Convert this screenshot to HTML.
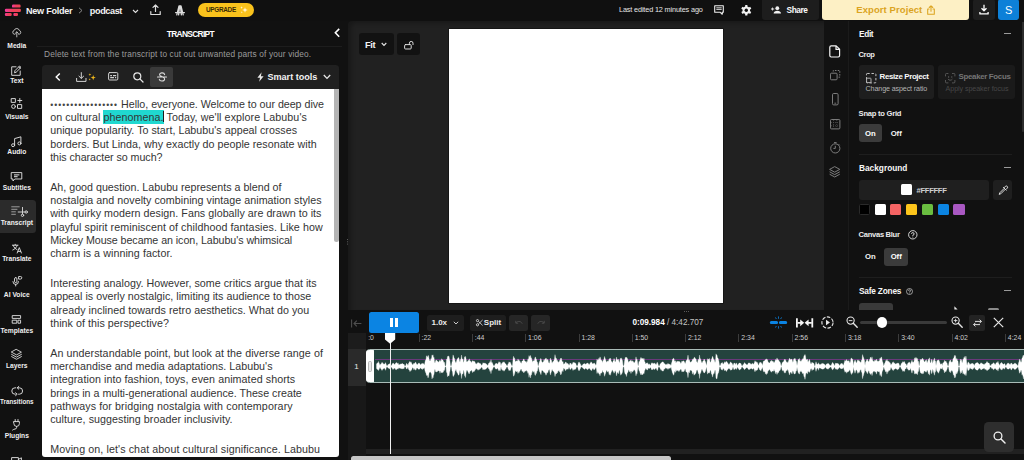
<!DOCTYPE html>
<html lang="en">
<head>
<meta charset="utf-8">
<title>podcast - editor</title>
<style>
*{box-sizing:border-box;margin:0;padding:0}
html,body{width:1024px;height:460px;overflow:hidden;background:#111111;font-family:"Liberation Sans","DejaVu Sans",sans-serif;color:#fff}
.abs{position:absolute}
#app{position:relative;width:1024px;height:460px;overflow:hidden;background:#111111}
svg{position:absolute;overflow:visible}
.t{position:absolute;white-space:nowrap;line-height:10px;height:10px;margin-top:-5px}
.c{transform:translateX(-50%)}
.b{font-weight:bold}
.ic{fill:none;stroke:#dcdcdc;stroke-width:0.95;stroke-linecap:round;stroke-linejoin:round}
/* sidebar */
.sl{position:absolute;left:-8.2px;width:50px;text-align:center;font-size:6.7px;font-weight:bold;line-height:8px;height:8px;margin-top:-4px;color:#f0f0f0;white-space:nowrap}
/* transcript */
#ttool{left:42px;top:64.7px;width:297.3px;height:24.3px;background:#202020;border-radius:3.5px 3.5px 0 0}
#twhite{left:42px;top:89px;width:297.3px;height:368px;background:#ffffff;border-radius:0 0 3px 3px;overflow:hidden}
#ttext{position:absolute;left:8.2px;top:8.6px;font-size:10.7px;line-height:13.34px;color:#343434;white-space:nowrap;letter-spacing:0.05px}
#ttext p{margin-bottom:16.25px}
.hl{background:#20d8d0;padding:1.1px 0 0.7px;position:relative}
.cur{position:absolute;right:-0.2px;top:1.6px;width:1.3px;height:10.4px;background:#1c1c1c}
.btn{position:absolute;background:#1e1e1e;border-radius:3px}
</style>
</head>
<body>
<div id="app">

<!-- ================= TOP BAR ================= -->
<div id="top" class="abs" style="left:0;top:0;width:1024px;height:21px;background:#101010"></div>
<!-- logo -->
<svg style="left:0;top:0" width="24" height="20" viewBox="0 0 24 20">
  <defs><linearGradient id="lg" x1="0" y1="0" x2="1" y2="0"><stop offset="0" stop-color="#f6389f"/><stop offset="0.45" stop-color="#ef3f5c"/><stop offset="1" stop-color="#ec4453"/></linearGradient></defs>
  <g fill="url(#lg)">
    <rect x="12" y="4.600" width="8.600" height="3" rx="1.200"/>
    <rect x="4.900" y="8.700" width="16" height="3.200" rx="1.200"/>
    <rect x="4.900" y="12.900" width="6.800" height="3" rx="1.200"/>
    <rect x="13.400" y="12.900" width="4.600" height="3" rx="1.200"/>
  </g>
</svg>
<div class="t b" style="left:26px;top:10.7px;font-size:9.1px;color:#f4f4f4;letter-spacing:-0.27px">New Folder</div>
<svg style="left:78px;top:7px" width="5" height="7" viewBox="0 0 5 7"><path d="M1 0.8L4 3.5L1 6.2" fill="none" stroke="#8a8a8a" stroke-width="1"/></svg>
<div class="t b" style="left:89.8px;top:10.7px;font-size:9.1px;color:#f4f4f4;letter-spacing:-0.38px">podcast</div>
<svg style="left:132px;top:9px" width="7" height="5" viewBox="0 0 7 5"><path d="M1 1L3.5 3.5L6 1" fill="none" stroke="#e0e0e0" stroke-width="1.1"/></svg>
<!-- upload icon -->
<svg style="left:150px;top:4px" width="11" height="12" viewBox="0 0 11 12"><path class="ic" style="stroke-width:1.2" d="M5.5 7.5V1.2M3 3.4L5.5 1L8 3.4M0.8 7.5V10.5H10.2V7.5"/></svg>
<!-- A icon -->
<svg style="left:175px;top:4.5px" width="10" height="11" viewBox="0 0 10 11"><path class="ic" style="stroke-width:1.3" d="M1.8 9.8L4 0.8H6L8.2 9.8M3.6 9.8L4.6 1.5M6.4 9.8L5.4 1.5M0.6 7.6H9.4"/></svg>
<!-- upgrade -->
<div class="abs" style="left:197.6px;top:2.5px;width:56.2px;height:14.6px;border-radius:7.3px;background:#f9c21c"></div>
<div class="t b" style="left:206px;top:9.9px;font-size:6.4px;color:#3a2c05;letter-spacing:-0.3px">UPGRADE</div>
<svg style="left:240px;top:6px" width="8" height="8" viewBox="0 0 8 8"><path d="M5 1.2L5.7 3.3L7.8 4L5.7 4.7L5 6.8L4.3 4.7L2.2 4L4.3 3.3ZM1.6 0.3L1.95 1.25L2.9 1.6L1.95 1.95L1.6 2.9L1.25 1.95L0.3 1.6L1.25 1.25ZM1.8 5.2L2.1 5.9L2.8 6.2L2.1 6.5L1.8 7.2L1.5 6.5L0.8 6.2L1.5 5.9Z" fill="#fff7dd"/></svg>

<div class="t" style="left:619px;top:10px;font-size:7.3px;color:#e6e6e6;letter-spacing:-0.15px">Last edited 12 minutes ago</div>
<!-- comment icon -->
<svg style="left:714px;top:5px" width="10" height="10" viewBox="0 0 10 10"><path d="M0.7 0.8H9.3V7.2H8.2V9.3L6 7.2H0.7Z" fill="none" stroke="#ededed" stroke-width="1.1" stroke-linejoin="round"/><path d="M2.3 2.8H7.7M2.3 4.4H7.7" stroke="#ededed" stroke-width="0.9"/></svg>
<!-- gear -->
<svg style="left:740.5px;top:4.7px" width="10.6" height="10.6" viewBox="-5.3 -5.3 10.6 10.6"><g fill="#f2f2f2"><circle r="3.7"/><g id="gt"><rect x="-1.15" y="-5.2" width="2.3" height="10.4" rx="0.5"/></g><use href="#gt" transform="rotate(60)"/><use href="#gt" transform="rotate(120)"/></g><circle r="1.7" fill="#101010"/></svg>
<!-- share -->
<div class="btn" style="left:761.6px;top:0;width:57.5px;height:19.6px;border-radius:0 0 3px 3px;background:#1d1d1d"></div>
<svg style="left:771px;top:6px" width="10" height="8" viewBox="0 0 10 8"><g fill="#f0f0f0"><circle cx="6.3" cy="2.2" r="1.9"/><path d="M2.6 7.6C2.6 5.6 4.4 4.8 6.3 4.8S10 5.6 10 7.6Z"/><path d="M0 2.6H1.2V1.4H2V2.6H3.2V3.4H2V4.6H1.2V3.4H0Z"/></g></svg>
<div class="t b" style="left:786.6px;top:10px;font-size:8.3px;color:#fafafa;letter-spacing:-0.45px">Share</div>
<!-- export -->
<div class="abs" style="left:822px;top:0;width:147.4px;height:19.7px;border-radius:0 0 3px 3px;background:#fdf0c5"></div>
<div class="t b" style="left:856.3px;top:10px;font-size:9.5px;color:#dba41f;letter-spacing:0.08px">Export Project</div>
<svg style="left:926.5px;top:4.8px" width="8" height="10" viewBox="0 0 8 10"><path d="M4 6.2V0.9M2.2 2.5L4 0.8L5.8 2.5M2 4H0.7V9.2H7.3V4H6" fill="none" stroke="#dba41f" stroke-width="1.05" stroke-linejoin="round" stroke-linecap="round"/></svg>
<!-- download -->
<div class="btn" style="left:973.1px;top:-1px;width:22px;height:20.7px;border-radius:3px;background:#1e1e1e"></div>
<svg style="left:979.2px;top:4.3px" width="10" height="11" viewBox="0 0 10 11"><path d="M5 0.8V6.6M2.5 4.3L5 6.8L7.5 4.3M0.9 8V9.9H9.1V8" fill="none" stroke="#fff" stroke-width="1.3" stroke-linejoin="round"/></svg>
<!-- avatar -->
<div class="abs" style="left:998.1px;top:-1px;width:20.6px;height:20.7px;border-radius:3px;background:#0d80d8"></div>
<div class="t c" style="left:1008.6px;top:10.2px;font-size:11px;color:#fff">S</div>

<!-- ================= SIDEBAR ================= -->
<div class="abs" style="left:0;top:200px;width:36px;height:32.5px;background:#2b2b2b;border-radius:0 3.5px 3.5px 0"></div>
<!-- media -->
<svg style="left:12px;top:27.8px" width="9.6" height="9.6" viewBox="0 0 11 11"><path class="ic" d="M3.3 7.2H2.8A2.3 2.3 0 0 1 2.6 2.7A3 3 0 0 1 8.4 2.9A2.2 2.2 0 0 1 8.2 7.2H7.7M5.5 10.2V4.6M3.7 6.2L5.5 4.4L7.3 6.2"/></svg>
<div class="sl" style="top:45.9px">Media</div>
<!-- text -->
<svg style="left:11px;top:64.6px" width="11" height="11" viewBox="0 0 11 11"><path class="ic" d="M5 1.8H0.7V10.3H9.2V6M3.6 7.4L4 5.6L8.6 1L10 2.4L5.4 7ZM7.7 1.9L9.1 3.3"/></svg>
<div class="sl" style="top:81px">Text</div>
<!-- visuals -->
<svg style="left:11.3px;top:98.3px" width="11.5" height="11" viewBox="0 0 11.5 11"><path class="ic" d="M0.6 0.6H4.4V4.4H0.6ZM6.9 6.6H10.7V10.4H6.9ZM8.8 0.5V4.5M6.8 2.5H10.8"/><circle class="ic" cx="2.5" cy="8.5" r="1.9"/></svg>
<div class="sl" style="top:117px">Visuals</div>
<!-- audio -->
<svg style="left:11.3px;top:135.8px" width="11" height="11" viewBox="0 0 11 11"><path class="ic" d="M3.6 9V2.6L9.9 0.8V7.2"/><circle class="ic" cx="2.1" cy="9.2" r="1.5"/><circle class="ic" cx="8.4" cy="7.4" r="1.5"/></svg>
<div class="sl" style="top:152.3px">Audio</div>
<!-- subtitles -->
<svg style="left:11px;top:172.2px" width="11.4" height="9.6" viewBox="0 0 11.4 9.6"><path class="ic" d="M0.6 0.6H10.8V7H3.8L2 9V7H0.6Z"/><path d="M3 2.9H8.4M3 4.6H6.6" stroke="#bdbdbd" stroke-width="1.2"/></svg>
<div class="sl" style="top:188.3px">Subtitles</div>
<!-- transcript -->
<svg style="left:11.3px;top:206.4px" width="17" height="11" viewBox="0 0 17 11"><path d="M0.3 0.8H8.6M0.3 3.3H6.4M0.3 5.8H4.8M0.3 8.3H4.8" stroke="#a9a9a9" stroke-width="0.9"/><path class="ic" style="stroke-width:0.9" d="M7.2 6H14M11.5 1.4V8"/><circle class="ic" style="stroke-width:0.9" cx="15.2" cy="6" r="1.2"/><circle class="ic" style="stroke-width:0.9" cx="11.5" cy="9.3" r="1.2"/></svg>
<div class="sl" style="top:223.4px">Transcript</div>
<!-- translate -->
<svg style="left:11.7px;top:243.7px" width="10" height="9.4" viewBox="0 0 10 9.4"><path class="ic" d="M0.4 1.2H6M3.2 0.3V1.2M1.2 1.4C1.8 3.6 3.6 5 5 5.6M5.2 1.4C4.6 3.6 2.4 5.4 0.8 6M5.2 9L7.3 3.6L9.4 9M6 7.4H8.6"/></svg>
<div class="sl" style="top:259.4px">Translate</div>
<!-- ai voice -->
<svg style="left:12px;top:276.2px" width="10.4" height="10.4" viewBox="0 0 10.4 10.4"><rect class="ic" x="2.5" y="1.6" width="2.4" height="5" rx="1.2"/><path class="ic" d="M0.900 5.600A2.800 2.800 0 0 0 6.500 5.600M3.700 8.400V10M7 0.500H8.500A1.300 1.300 0 0 1 8.500 3.100H7Z"/></svg>
<div class="sl" style="top:294.6px">AI Voice</div>
<!-- templates -->
<svg style="left:12.1px;top:315px" width="9.2" height="8.8" viewBox="0 0 9.2 8.800"><path class="ic" d="M0.600 0.600H8.600V3.400H0.600ZM0.600 5.200H4.800V8.200H0.600ZM6.400 5.200H8.600V8.200H6.400Z"/></svg>
<div class="sl" style="top:330.6px">Templates</div>
<!-- layers -->
<svg style="left:11px;top:349.3px" width="11" height="11.6" viewBox="0 0 11 11.600"><path class="ic" style="stroke-width:0.9" d="M5.500 0.500L10.400 3.200L5.500 5.900L0.600 3.200ZM0.600 5.400L5.500 8.100L10.400 5.400M0.600 7.600L5.500 10.300L10.400 7.600"/></svg>
<div class="sl" style="top:365.9px">Layers</div>
<!-- transitions -->
<svg style="left:10.6px;top:385.6px" width="12.4" height="10" viewBox="0 0 12.400 10"><path class="ic" d="M4.800 1.800H4A3.200 3.200 0 0 0 4 8.200H4.400M7.600 8.200H8.400A3.200 3.200 0 0 0 8.400 1.800H6.400M7.800 0.400L6.200 1.800L7.800 3.200M4.600 6.800L6.200 8.200L4.600 9.600"/></svg>
<div class="sl" style="top:401.5px;font-size:6.3px">Transitions</div>
<!-- plugins -->
<svg style="left:12px;top:419px" width="8.6" height="11.6" viewBox="0 0 8.600 11.600"><path class="ic" d="M3.200 0.500V2.600M6 0.500V2.600M1.800 2.600H7.400V4.600A2.800 2.800 0 0 1 1.800 4.600ZM4.600 7.400V8.800C4.600 10.400 2 9.600 0.600 11"/></svg>
<div class="sl" style="top:435.5px">Plugins</div>
<!-- next (cut off) -->
<svg style="left:11px;top:456.6px" width="11" height="6" viewBox="0 0 11 6"><path class="ic" d="M0.600 5V0.600H7.400V5M7.400 2.400L10.400 0.800V5"/></svg>

<!-- ================= TRANSCRIPT PANEL ================= -->
<div class="t b c" style="left:190.3px;top:34.3px;font-size:8.4px;color:#fff;letter-spacing:-0.68px">TRANSCRIPT</div>
<svg style="left:333.500px;top:28.300px" width="6.600" height="9.600" viewBox="0 0 6 9"><path d="M4.800 0.800L1.200 4.500L4.800 8.200" fill="none" stroke="#fff" stroke-width="1.5"/></svg>
<div class="abs" style="left:36.5px;top:45.8px;width:305px;height:1px;background:#1d1d1d"></div>
<div class="t" style="left:44px;top:54.4px;font-size:8.3px;color:#9c9c9c;letter-spacing:0.15px">Delete text from the transcript to cut out unwanted parts of your video.</div>
<div id="ttool" class="abs"></div>
<!-- toolbar icons -->
<svg style="left:54.6px;top:73px" width="6" height="8" viewBox="0 0 6 8"><path d="M4.800 0.500L1.200 4L4.800 7.500" fill="none" stroke="#fff" stroke-width="1.4"/></svg>
<svg style="left:76px;top:71.6px" width="10.600" height="10" viewBox="0 0 10.600 10"><path class="ic" style="stroke:#dcdcdc" d="M5.300 0.600V6.200M3 4.200L5.300 6.400L7.600 4.200M0.600 6.400V9.400H10V6.400"/></svg>
<svg style="left:87.600px;top:72.600px" width="8" height="8" viewBox="0 0 8 8"><path d="M5.200 2L5.900 3.900L7.800 4.600L5.900 5.300L5.200 7.200L4.500 5.300L2.600 4.600L4.500 3.900ZM1.900 0.200L2.300 1.200L3.300 1.600L2.300 2L1.900 3L1.500 2L0.500 1.600L1.500 1.200ZM1.700 5.400L2 6.100L2.700 6.400L2 6.700L1.700 7.400L1.400 6.700L0.700 6.400L1.400 6.100Z" fill="#f1b91b"/></svg>
<svg style="left:108.400px;top:72.300px" width="10.400" height="8.600" viewBox="0 0 10.400 8.600"><rect class="ic" style="stroke:#dcdcdc" x="0.600" y="0.600" width="9.200" height="7.400" rx="1"/><path d="M2.200 3.600H4M5 3.600H8.200M2.200 5.600H6M7 5.600H8.200" stroke="#cfcfcf" stroke-width="1.100"/></svg>
<svg style="left:132.600px;top:71.800px" width="10.600" height="10.600" viewBox="0 0 10.600 10.600"><circle class="ic" style="stroke:#e6e6e6;stroke-width:1.200" cx="4.300" cy="4.300" r="3.500"/><path d="M6.900 6.900L10 10" stroke="#e6e6e6" stroke-width="1.300" stroke-linecap="round"/></svg>
<div class="abs" style="left:150.300px;top:67px;width:23px;height:19.600px;background:#3a3a3a;border-radius:2px"></div>
<svg style="left:157px;top:72px" width="10" height="10" viewBox="0 0 10 10"><path class="ic" style="stroke:#dedede;stroke-width:1.100" d="M7.600 2.600C7.300 0.200 2.400 0.400 2.600 2.800C2.700 3.800 3.600 4.300 5 4.600M2.300 7.200C2.600 9.800 7.800 9.600 7.600 7C7.500 6 6.900 5.500 6.200 5.200M0.500 5H9.500"/></svg>
<svg style="left:257px;top:71.600px" width="7" height="10" viewBox="0 0 7 10"><path d="M4.600 0.300L0.400 5.700H3L2.200 9.700L6.600 4.200H3.900Z" fill="#e8e8e8"/></svg>
<div class="t b" style="left:267.400px;top:76.600px;font-size:9.100px;color:#f2f2f2">Smart tools</div>
<svg style="left:322.600px;top:74px" width="8" height="6" viewBox="0 0 8 6"><path d="M0.800 1L4 4.400L7.200 1" fill="none" stroke="#e6e6e6" stroke-width="1.300"/></svg>

<div id="twhite" class="abs">
<div id="ttext">
<p><span id="L0" style="letter-spacing:-0.031px"><span style="letter-spacing:1.02px;font-size:8.5px;line-height:1px;color:#444">•••••••••••••••••</span> Hello, everyone. Welcome to our deep dive</span><br><span id="L1" style="letter-spacing:0.079px">on cultural <span class="hl">phenomena.<i class="cur"></i></span> Today, we'll explore Labubu's</span><br><span id="L2" style="letter-spacing:0.031px">unique popularity. To start, Labubu's appeal crosses</span><br><span id="L3" style="letter-spacing:0.028px">borders. But Linda, why exactly do people resonate with</span><br><span id="L4" style="letter-spacing:-0.053px">this character so much?</span></p>
<p><span id="L5" style="letter-spacing:0.003px">Ah, good question. Labubu represents a blend of</span><br><span id="L6" style="letter-spacing:0.040px">nostalgia and novelty combining vintage animation styles</span><br><span id="L7" style="letter-spacing:0.039px">with quirky modern design. Fans globally are drawn to its</span><br><span id="L8" style="letter-spacing:0.068px">playful spirit reminiscent of childhood fantasies. Like how</span><br><span id="L9" style="letter-spacing:-0.065px">Mickey Mouse became an icon, Labubu's whimsical</span><br><span id="L10" style="letter-spacing:0.065px">charm is a winning factor.</span></p>
<p><span id="L11" style="letter-spacing:0.042px">Interesting analogy. However, some critics argue that its</span><br><span id="L12" style="letter-spacing:0.026px">appeal is overly nostalgic, limiting its audience to those</span><br><span id="L13" style="letter-spacing:0.047px">already inclined towards retro aesthetics. What do you</span><br><span id="L14" style="letter-spacing:0.043px">think of this perspective?</span></p>
<p><span id="L15" style="letter-spacing:0.074px">An understandable point, but look at the diverse range of</span><br><span id="L16" style="letter-spacing:0.024px">merchandise and media adaptations. Labubu's</span><br><span id="L17" style="letter-spacing:0.075px">integration into fashion, toys, even animated shorts</span><br><span id="L18" style="letter-spacing:-0.002px">brings in a multi-generational audience. These create</span><br><span id="L19" style="letter-spacing:0.101px">pathways for bridging nostalgia with contemporary</span><br><span id="L20" style="letter-spacing:0.049px">culture, suggesting broader inclusivity.</span></p>
<p><span id="L21" style="letter-spacing:0.093px">Moving on, let's chat about cultural significance. Labubu</span></p>
</div>
<div class="abs" style="left:292.400px;top:0;width:4.900px;height:153.400px;background:#b4b4b4;border-radius:0 0 2.500px 2.500px"></div>
</div>
<!-- resize dots -->
<div class="abs" style="left:346.500px;top:238.600px;width:1px;height:1px;background:#5a5a5a;box-shadow:0 2.300px 0 #5a5a5a,0 4.600px 0 #5a5a5a"></div>

<!-- ================= CANVAS AREA ================= -->
<div class="abs" style="left:348px;top:21.300px;width:476px;height:288.6px;background:#212121;border-radius:4px 0 0 0;box-shadow:inset 4px 3px 4px -1px rgba(0,0,0,0.28)"></div>
<div class="abs" style="left:449px;top:28.800px;width:274.300px;height:273.800px;background:#ffffff;box-shadow:0 0 0 0.9px #161616"></div>
<div class="btn" style="left:359px;top:32.700px;width:34.800px;height:22.800px;background:#121212"></div>
<div class="t b" style="left:365px;top:44.900px;font-size:9.300px;color:#f4f4f4;letter-spacing:-0.35px">Fit</div>
<svg style="left:381.300px;top:42px" width="6" height="5" viewBox="0 0 6 5"><path d="M0.700 1L3 3.400L5.300 1" fill="none" stroke="#e6e6e6" stroke-width="1.100"/></svg>
<div class="btn" style="left:397px;top:32.700px;width:22.800px;height:22.800px;background:#121212"></div>
<svg style="left:403.600px;top:39.800px" width="10" height="9.400" viewBox="0 0 10 9.400"><rect class="ic" style="stroke:#e6e6e6" x="0.600" y="4.600" width="6.600" height="4.400" rx="0.900"/><path class="ic" style="stroke:#e6e6e6" d="M5.400 4.600V3.200A1.800 1.800 0 0 1 9 3.200V4.600"/></svg>

<!-- ================= RIGHT ICON COLUMN + PANEL ================= -->
<div class="abs" style="left:824px;top:21px;width:25px;height:288.500px;background:#121212"></div>
<div class="abs" style="left:848.400px;top:21px;width:1px;height:288.500px;background:#1b1b1b"></div>
<div class="abs" style="left:849.400px;top:21px;width:174.600px;height:288.500px;background:#111111"></div>
<!-- scroll strip -->
<div class="abs" style="left:1021.8px;top:21.5px;width:2.2px;height:110px;background:#2c2c2c;border-radius:0 0 1px 1px"></div>
<!-- icon column icons -->
<svg style="left:829.400px;top:45px" width="11.400" height="12.800" viewBox="0 0 11.400 12.800"><path d="M0.800 2.200A1.400 1.400 0 0 1 2.200 0.800H7.200L10.600 4.200V10.600A1.400 1.400 0 0 1 9.200 12H2.200A1.400 1.400 0 0 1 0.800 10.600ZM7 0.900V4.400H10.500" fill="none" stroke="#f4f4f4" stroke-width="1.200" stroke-linejoin="round"/></svg>
<svg style="left:830px;top:70.400px" width="10.400" height="10.400" viewBox="0 0 10.400 10.400"><rect x="0.500" y="3.200" width="6.600" height="6.600" rx="1" fill="none" stroke="#7d7d7d" stroke-width="1"/><path d="M3.200 1.600V0.500H9.800V7.200H8.600" fill="none" stroke="#7d7d7d" stroke-width="1" stroke-dasharray="1.600 1.200"/></svg>
<svg style="left:832px;top:93.400px" width="6.600" height="12.400" viewBox="0 0 6.600 12.400"><rect x="0.500" y="0.500" width="5.600" height="11.400" rx="1.200" fill="none" stroke="#7d7d7d" stroke-width="1"/><path d="M2.400 10.200H4.200" stroke="#7d7d7d" stroke-width="0.900"/></svg>
<svg style="left:830px;top:118.600px" width="10.400" height="10.400" viewBox="0 0 10.400 10.400"><rect x="0.500" y="0.500" width="9.400" height="9.400" rx="1" fill="none" stroke="#7d7d7d" stroke-width="1"/><path d="M3.600 1V9.400M6.800 1V9.400M1 3.600H9.400M1 6.800H9.400" stroke="#5a5a5a" stroke-width="0.700" stroke-dasharray="1 1"/></svg>
<svg style="left:829.600px;top:142px" width="11" height="11.600" viewBox="0 0 11 11.600"><circle cx="5.300" cy="6.400" r="4.600" fill="none" stroke="#7d7d7d" stroke-width="1"/><path d="M5.300 3.800V6.400H3.400M4 0.600H6.600M8.600 2.200L9.600 3.200" fill="none" stroke="#7d7d7d" stroke-width="1"/></svg>
<svg style="left:829.400px;top:165.600px" width="11.400" height="12" viewBox="0 0 11.400 12"><path d="M5.700 0.600L10.800 3.400L5.700 6.200L0.600 3.400ZM0.600 5.800L5.700 8.600L10.800 5.800M0.600 8.200L5.700 11L10.800 8.200" fill="none" stroke="#7d7d7d" stroke-width="1" stroke-linejoin="round"/></svg>

<!-- panel content -->
<div class="t b" style="left:859px;top:34.400px;font-size:8.300px;color:#f6f6f6;letter-spacing:-0.35px">Edit</div>
<div class="abs" style="left:1003.600px;top:33.100px;width:7.2px;height:1.200px;background:#9a9a9a"></div>
<div class="t b" style="left:858.600px;top:54.600px;font-size:7.500px;color:#ececec;letter-spacing:-0.4px">Crop</div>
<div class="btn" style="left:858.800px;top:65px;width:75.600px;height:33.600px;background:#1e1e1e"></div>
<svg style="left:866px;top:73px" width="10.400" height="10.400" viewBox="0 0 10.400 10.400"><rect x="0.500" y="0.500" width="9.400" height="9.400" rx="0.800" fill="none" stroke="#d8d8d8" stroke-width="0.900" stroke-dasharray="2.400 1.800"/><rect x="0.600" y="5.200" width="4.400" height="4.400" rx="0.600" fill="none" stroke="#bdbdbd" stroke-width="0.900"/></svg>
<div class="t b" style="left:879.600px;top:77.200px;font-size:7.900px;color:#fafafa;letter-spacing:-0.36px">Resize Project</div>
<div class="t" style="left:865.600px;top:89.100px;font-size:7.150px;color:#b4b4b4;letter-spacing:-0.13px">Change aspect ratio</div>
<div class="btn" style="left:938.200px;top:65px;width:76.800px;height:33.600px;background:#1a1a1a"></div>
<svg style="left:945.400px;top:73px" width="10.400" height="10.400" viewBox="0 0 10.400 10.400"><path d="M0.500 3V1.500A1 1 0 0 1 1.500 0.500H3M7.400 0.500H8.900A1 1 0 0 1 9.900 1.500V3M9.900 7.400V8.900A1 1 0 0 1 8.900 9.900H7.400M3 9.900H1.500A1 1 0 0 1 0.500 8.900V7.400M3.200 6.400C4 7.600 6.400 7.600 7.200 6.400M3.600 3.600V4.400M6.800 3.600V4.400" fill="none" stroke="#5c5c5c" stroke-width="0.900" stroke-linecap="round"/></svg>
<div class="t b" style="left:958.600px;top:77.200px;font-size:7.900px;color:#757575;letter-spacing:-0.33px">Speaker Focus</div>
<div class="t" style="left:945.600px;top:89.100px;font-size:7.150px;color:#474747;letter-spacing:-0.08px">Apply speaker focus</div>

<div class="t b" style="left:858.600px;top:114px;font-size:7.600px;color:#ececec;letter-spacing:-0.25px">Snap to Grid</div>
<div class="btn" style="left:858.600px;top:124px;width:23.600px;height:18.200px;background:#3b3b3b"></div>
<div class="t b c" style="left:870.400px;top:133.500px;font-size:7.700px;color:#fff">On</div>
<div class="t b c" style="left:896.200px;top:133.500px;font-size:7.700px;color:#f4f4f4">Off</div>
<div class="abs" style="left:859px;top:154px;width:153px;height:1px;background:#1e1e1e"></div>

<div class="t b" style="left:859px;top:168px;font-size:8.300px;color:#f6f6f6">Background</div>
<div class="abs" style="left:1003.600px;top:167.200px;width:7px;height:1.200px;background:#9a9a9a"></div>
<div class="btn" style="left:858.600px;top:180px;width:130.600px;height:19.500px;background:#1f1f1f"></div>
<div class="abs" style="left:900.600px;top:184.400px;width:11.400px;height:11px;background:#fff;border-radius:1.500px"></div>
<div class="t b" style="left:916.600px;top:191.100px;font-size:7.700px;color:#cfcfcf;letter-spacing:-0.37px">#FFFFFF</div>
<div class="btn" style="left:993px;top:180px;width:19.200px;height:19.500px;background:#1f1f1f"></div>
<svg style="left:997.600px;top:184.600px" width="10.400" height="10.400" viewBox="0 0 10.400 10.400"><path d="M6.200 2.600L7.600 1.200A1.300 1.300 0 0 1 9.400 3L8 4.400M5.400 2.400L8.200 5.200M6.200 3.400L1.800 7.800L1.200 9.400L2.800 8.800L7.200 4.400" fill="none" stroke="#e4e4e4" stroke-width="0.950" stroke-linejoin="round" stroke-linecap="round"/></svg>
<!-- swatches -->
<div class="abs" style="left:859px;top:204px;width:11.200px;height:11.400px;background:#000;border:0.700px solid #2a2a2a;border-radius:1.500px"></div>
<div class="abs" style="left:874.500px;top:204px;width:11.200px;height:11.400px;background:#fff;border-radius:1.500px"></div>
<div class="abs" style="left:890.300px;top:204px;width:11.200px;height:11.400px;background:#f56464;border-radius:1.500px"></div>
<div class="abs" style="left:906px;top:204px;width:11.200px;height:11.400px;background:#fcc41b;border-radius:1.500px"></div>
<div class="abs" style="left:921.800px;top:204px;width:11.200px;height:11.400px;background:#6abd40;border-radius:1.500px"></div>
<div class="abs" style="left:937.600px;top:204px;width:11.200px;height:11.400px;background:#0b84e2;border-radius:1.500px"></div>
<div class="abs" style="left:953.400px;top:204px;width:11.200px;height:11.400px;background:#a958c2;border-radius:1.500px"></div>

<div class="t b" style="left:858.600px;top:235px;font-size:7.600px;color:#ececec;letter-spacing:-0.3px">Canvas Blur</div>
<svg style="left:908.200px;top:230.200px" width="9.600" height="9.600" viewBox="0 0 9.600 9.600"><circle cx="4.800" cy="4.800" r="4.200" fill="none" stroke="#e6e6e6" stroke-width="0.900"/><path d="M3.500 3.800A1.300 1.300 0 1 1 4.800 5.200V5.900" fill="none" stroke="#e6e6e6" stroke-width="0.900"/><circle cx="4.800" cy="7.100" r="0.500" fill="#e6e6e6"/></svg>
<div class="t b c" style="left:870.400px;top:256.700px;font-size:7.700px;color:#f4f4f4">On</div>
<div class="btn" style="left:884px;top:247.600px;width:24px;height:18.400px;background:#3b3b3b"></div>
<div class="t b c" style="left:896.200px;top:256.700px;font-size:7.700px;color:#fff">Off</div>
<div class="abs" style="left:859px;top:277.400px;width:153px;height:1px;background:#1e1e1e"></div>

<div class="t b" style="left:859px;top:291.400px;font-size:8.300px;color:#f6f6f6;letter-spacing:-0.2px">Safe Zones</div>
<svg style="left:905.600px;top:287.600px" width="7" height="7" viewBox="0 0 7 7"><circle cx="3.500" cy="3.500" r="3" fill="none" stroke="#cfcfcf" stroke-width="0.700"/><path d="M2.500 2.800A1 1 0 1 1 3.500 3.800V4.300" fill="none" stroke="#cfcfcf" stroke-width="0.700"/><circle cx="3.500" cy="5.200" r="0.400" fill="#cfcfcf"/></svg>
<div class="abs" style="left:1003.600px;top:290.200px;width:7px;height:1.200px;background:#9a9a9a"></div>
<div class="abs" style="left:859px;top:303px;width:33.600px;height:10px;background:#3a3a3a;border-radius:3px 3px 0 0"></div>
<div class="abs" style="left:988px;top:308.200px;width:11px;height:3px;background:#8a8a8a;border-radius:1.500px"></div>
<svg style="left:953.600px;top:305.600px" width="4" height="5" viewBox="0 0 4 5"><path d="M0.400 0.200L3.600 3.600H0.400Z" fill="#e8e8e8"/></svg>

<!-- ================= TIMELINE ================= -->
<div id="tl" class="abs" style="left:339.300px;top:309.900px;width:684.700px;height:150.100px;background:#111111"></div>
<div class="abs" style="left:348.300px;top:332.600px;width:17.500px;height:127.400px;background:#181818"></div>
<div class="abs" style="left:348.300px;top:332.600px;width:17.500px;height:16.200px;background:#1c1c1c"></div>
<!-- handle dots -->
<div class="abs" style="left:684px;top:311.400px;width:1px;height:1px;background:#5a5a5a;box-shadow:2px 0 0 #5a5a5a,4px 0 0 #5a5a5a"></div>
<!-- collapse -->
<svg style="left:350.600px;top:318.600px" width="11" height="9" viewBox="0 0 11 9"><path d="M0.600 0.600V8.400M3 4.500H10.400M5.800 1.700L3 4.500L5.800 7.300" fill="none" stroke="#4e4e4e" stroke-width="1.100"/></svg>
<!-- pause -->
<div class="abs" style="left:369px;top:312px;width:50px;height:20.600px;background:#0b84e3;border-radius:2.500px"></div>
<div class="abs" style="left:390.300px;top:318px;width:2.500px;height:9px;background:#fff"></div>
<div class="abs" style="left:395.300px;top:318px;width:2.600px;height:9px;background:#fff"></div>
<!-- speed -->
<div class="btn" style="left:426.500px;top:315px;width:37px;height:15.800px;background:#1e1e1e;border-radius:2.500px"></div>
<div class="t b" style="left:431.500px;top:323.200px;font-size:8px;color:#ececec">1.0x</div>
<svg style="left:453.400px;top:321.400px" width="6" height="4.400" viewBox="0 0 6 4.400"><path d="M0.800 0.800L3 3L5.200 0.800" fill="none" stroke="#cfcfcf" stroke-width="1"/></svg>
<!-- split -->
<div class="btn" style="left:470.300px;top:315px;width:35.800px;height:15.800px;background:#1e1e1e;border-radius:2.500px"></div>
<svg style="left:475.600px;top:319.400px" width="7" height="7.400" viewBox="0 0 7 7.400"><circle cx="1.500" cy="1.600" r="1.100" fill="none" stroke="#e6e6e6" stroke-width="0.800"/><circle cx="1.500" cy="5.800" r="1.100" fill="none" stroke="#e6e6e6" stroke-width="0.800"/><path d="M2.400 2.300L6.600 6.400M2.400 5.100L6.600 1" stroke="#e6e6e6" stroke-width="0.800"/></svg>
<div class="t b" style="left:483.800px;top:323.200px;font-size:8px;color:#ececec">Split</div>
<!-- undo/redo -->
<div class="btn" style="left:509.100px;top:314.800px;width:18.800px;height:16.200px;background:#262626;border-radius:2.500px"></div>
<svg style="left:514.600px;top:320.400px" width="8" height="5" viewBox="0 0 8 5"><path d="M1 3C2.400 0.800 5.800 0.800 7.200 3.600M0.800 0.800V3.200H3.200" fill="none" stroke="#4a4a4a" stroke-width="1"/></svg>
<div class="btn" style="left:531.400px;top:314.800px;width:18.800px;height:16.200px;background:#262626;border-radius:2.500px"></div>
<svg style="left:537px;top:320.400px" width="8" height="5" viewBox="0 0 8 5"><path d="M7 3C5.600 0.800 2.200 0.800 0.800 3.600M7.200 0.800V3.200H4.800" fill="none" stroke="#4a4a4a" stroke-width="1"/></svg>
<!-- time -->
<div class="t" style="left:632.400px;top:323.200px;font-size:8.2px;color:#c4c4c4"><span class="b" style="color:#fff">0:09.984</span> / 4:42.707</div>
<!-- snap icon -->
<svg style="left:770px;top:316px" width="17" height="13" viewBox="0 0 17 13"><path d="M1.300 6.500H6.600M10.400 6.500H15.700" stroke="#0b84e3" stroke-width="3" stroke-linecap="round"/><path d="M8.500 0.400V2.800M8.500 10.200V12.600M5.400 1.400L6.400 3M11.600 1.400L10.600 3M5.400 11.600L6.400 10M11.600 11.600L10.600 10" stroke="#0b84e3" stroke-width="0.800"/></svg>
<!-- trim icon -->
<svg style="left:795.600px;top:317.800px" width="17.600" height="9.600" viewBox="0 0 17.600 9.600"><path d="M0.900 0.200V9.400M16.300 0.200V9.400" stroke="#f4f4f4" stroke-width="1.800"/><path d="M1.400 4.800H5M11.600 4.800H15.800" stroke="#f4f4f4" stroke-width="1.700"/><path d="M4.200 1.400L8.200 4.800L4.200 8.200ZM12.600 1.400L8.600 4.800L12.600 8.200Z" fill="#f4f4f4"/></svg>
<!-- play circle -->
<svg style="left:821px;top:316px" width="13" height="13" viewBox="0 0 13 13"><circle cx="6.500" cy="6.500" r="5.600" fill="none" stroke="#e6e6e6" stroke-width="1.100" stroke-dasharray="3.600 1.400"/><path d="M5 3.800L9 6.500L5 9.200Z" fill="#e6e6e6"/></svg>
<!-- zoom out -->
<svg style="left:845.600px;top:316.400px" width="12" height="12" viewBox="0 0 12 12"><circle cx="4.600" cy="4.600" r="3.600" fill="none" stroke="#e6e6e6" stroke-width="1.100"/><path d="M7.300 7.300L11.200 11.200" stroke="#e6e6e6" stroke-width="1.400" stroke-linecap="round"/><path d="M2.800 4.600H6.400" stroke="#e6e6e6" stroke-width="0.900"/></svg>
<div class="abs" style="left:860px;top:321px;width:86.600px;height:3px;background:#3a3a3a;border-radius:1.500px"></div>
<div class="abs" style="left:876.600px;top:317.400px;width:10.200px;height:10.200px;background:#fff;border-radius:50%"></div>
<!-- zoom in -->
<svg style="left:951.400px;top:316.400px" width="12" height="12" viewBox="0 0 12 12"><circle cx="4.600" cy="4.600" r="3.600" fill="none" stroke="#e6e6e6" stroke-width="1.100"/><path d="M7.300 7.300L11.200 11.200" stroke="#e6e6e6" stroke-width="1.400" stroke-linecap="round"/><path d="M2.800 4.600H6.400M4.600 2.800V6.400" stroke="#e6e6e6" stroke-width="0.900"/></svg>
<!-- swap -->
<div class="btn" style="left:969px;top:314.800px;width:16px;height:16px;background:#232323;border-radius:2px"></div>
<svg style="left:972.600px;top:318.600px" width="9" height="8" viewBox="0 0 9 8"><path d="M2 2.400H8.400M6.600 0.600L8.400 2.400L6.600 4.200M7 5.600H0.600M2.400 3.800L0.600 5.600L2.400 7.400" fill="none" stroke="#e6e6e6" stroke-width="0.950"/></svg>
<!-- close -->
<svg style="left:992.600px;top:317.200px" width="11" height="11" viewBox="0 0 11 11"><path d="M0.800 0.800L10.200 10.200M10.200 0.800L0.800 10.200" stroke="#e6e6e6" stroke-width="1.200"/></svg>

<!-- ruler -->
<div id="ruler"><div class="t" style="left:368.2px;top:338px;font-size:6.900px;color:#cdcdcd">:0</div><div class="abs" style="left:418.6px;top:334px;width:1px;height:8px;background:#3c3c3c"></div><div class="t" style="left:421.5px;top:338px;font-size:6.900px;color:#cdcdcd">:22</div><div class="abs" style="left:471.9px;top:334px;width:1px;height:8px;background:#3c3c3c"></div><div class="t" style="left:474.8px;top:338px;font-size:6.900px;color:#cdcdcd">:44</div><div class="abs" style="left:525.2px;top:334px;width:1px;height:8px;background:#3c3c3c"></div><div class="t" style="left:528.1px;top:338px;font-size:6.900px;color:#cdcdcd">1:06</div><div class="abs" style="left:578.5px;top:334px;width:1px;height:8px;background:#3c3c3c"></div><div class="t" style="left:581.4px;top:338px;font-size:6.900px;color:#cdcdcd">1:28</div><div class="abs" style="left:631.8px;top:334px;width:1px;height:8px;background:#3c3c3c"></div><div class="t" style="left:634.7px;top:338px;font-size:6.900px;color:#cdcdcd">1:50</div><div class="abs" style="left:685.1px;top:334px;width:1px;height:8px;background:#3c3c3c"></div><div class="t" style="left:688.0px;top:338px;font-size:6.900px;color:#cdcdcd">2:12</div><div class="abs" style="left:738.4px;top:334px;width:1px;height:8px;background:#3c3c3c"></div><div class="t" style="left:741.3px;top:338px;font-size:6.900px;color:#cdcdcd">2:34</div><div class="abs" style="left:791.7px;top:334px;width:1px;height:8px;background:#3c3c3c"></div><div class="t" style="left:794.6px;top:338px;font-size:6.900px;color:#cdcdcd">2:56</div><div class="abs" style="left:845.0px;top:334px;width:1px;height:8px;background:#3c3c3c"></div><div class="t" style="left:847.9px;top:338px;font-size:6.900px;color:#cdcdcd">3:18</div><div class="abs" style="left:898.3px;top:334px;width:1px;height:8px;background:#3c3c3c"></div><div class="t" style="left:901.2px;top:338px;font-size:6.900px;color:#cdcdcd">3:40</div><div class="abs" style="left:951.6px;top:334px;width:1px;height:8px;background:#3c3c3c"></div><div class="t" style="left:954.5px;top:338px;font-size:6.900px;color:#cdcdcd">4:02</div><div class="abs" style="left:1004.9px;top:334px;width:1px;height:8px;background:#3c3c3c"></div><div class="t" style="left:1007.8px;top:338px;font-size:6.900px;color:#cdcdcd">4:24</div></div>

<!-- track -->
<div class="abs" style="left:348.300px;top:348.800px;width:17.700px;height:36.800px;background:#2a2a2a"></div>
<div class="t c" style="left:356.400px;top:366.600px;font-size:8px;color:#e6e6e6">1</div>
<div class="abs" style="left:366px;top:349.200px;width:662px;height:33.500px;background:#24433e;border:1px solid #a9bbb7;border-radius:3.5px 0 0 3.5px"></div>
<div class="abs" style="left:366.200px;top:350.400px;width:7.900px;height:31.300px;background:#fff;border-radius:3px 0.5px 0.5px 3px"></div>
<div class="abs" style="left:368.300px;top:361.200px;width:3.300px;height:10.400px;background:#e9e9e9;border:0.800px solid #b5b5b5;border-radius:1.600px"></div>
<div class="abs" style="left:374.600px;top:359.200px;width:650px;height:0.600px;background:#8f349c;opacity:0.65"></div>
<svg style="left:0;top:0" width="1024" height="460" viewBox="0 0 1024 460"><path d="M376.5 366.30L376.5 363.91L377.0 363.42L377.5 362.81L378.0 363.13L378.5 361.45L379.0 362.94L379.5 364.03L380.0 365.55L380.5 364.29L381.0 363.70L381.5 363.42L382.0 362.33L382.5 362.86L383.0 363.51L383.5 363.87L384.0 364.60L384.5 364.04L385.0 363.73L385.5 362.62L386.0 363.84L386.5 365.59L387.0 365.87L387.5 365.70L388.0 364.56L388.5 364.51L389.0 363.98L389.5 363.80L390.0 363.83L390.5 364.52L391.0 364.90L391.5 365.92L392.0 364.55L392.5 363.60L393.0 363.27L393.5 363.33L394.0 363.81L394.5 364.60L395.0 364.43L395.5 363.26L396.0 362.69L396.5 362.53L397.0 363.29L397.5 364.10L398.0 362.87L398.5 364.25L399.0 365.18L399.5 364.38L400.0 364.15L400.5 364.13L401.0 363.69L401.5 363.97L402.0 363.86L402.5 363.50L403.0 363.79L403.5 364.59L404.0 364.11L404.5 365.78L405.0 365.94L405.5 365.92L406.0 364.78L406.5 363.31L407.0 363.85L407.5 364.57L408.0 365.73L408.5 363.49L409.0 362.86L409.5 361.77L410.0 361.38L410.5 362.72L411.0 361.75L411.5 363.00L412.0 363.96L412.5 364.99L413.0 364.58L413.5 363.94L414.0 363.04L414.5 364.06L415.0 363.10L415.5 361.93L416.0 362.78L416.5 364.22L417.0 364.20L417.5 364.65L418.0 363.94L418.5 363.04L419.0 363.22L419.5 363.17L420.0 363.97L420.5 364.90L421.0 364.50L421.5 363.70L422.0 363.58L422.5 363.29L423.0 364.10L423.5 363.51L424.0 364.55L424.5 364.97L425.0 362.07L425.5 360.01L426.0 359.49L426.5 355.71L427.0 356.53L427.5 357.56L428.0 355.46L428.5 355.69L429.0 358.62L429.5 360.41L430.0 360.94L430.5 360.59L431.0 358.54L431.5 359.06L432.0 354.90L432.5 356.03L433.0 354.78L433.5 358.01L434.0 357.28L434.5 361.88L435.0 363.26L435.5 361.13L436.0 360.07L436.5 360.06L437.0 361.00L437.5 361.08L438.0 361.97L438.5 362.36L439.0 361.45L439.5 360.93L440.0 359.96L440.5 361.35L441.0 361.42L441.5 358.71L442.0 360.01L442.5 359.81L443.0 360.23L443.5 361.40L444.0 362.78L444.5 362.26L445.0 365.92L445.5 365.91L446.0 365.77L446.5 359.08L447.0 359.76L447.5 356.50L448.0 356.15L448.5 355.95L449.0 356.44L449.5 359.20L450.0 361.78L450.5 365.89L451.0 365.80L451.5 365.71L452.0 362.18L452.5 360.96L453.0 354.89L453.5 355.91L454.0 358.10L454.5 358.39L455.0 360.91L455.5 362.33L456.0 363.06L456.5 361.14L457.0 359.55L457.5 359.07L458.0 358.03L458.5 357.38L459.0 358.51L459.5 360.92L460.0 362.31L460.5 359.27L461.0 359.57L461.5 354.99L462.0 358.52L462.5 359.22L463.0 359.17L463.5 362.61L464.0 361.70L464.5 356.71L465.0 357.29L465.5 356.24L466.0 358.60L466.5 361.47L467.0 362.28L467.5 361.21L468.0 361.33L468.5 360.15L469.0 359.40L469.5 358.92L470.0 361.47L470.5 360.81L471.0 362.06L471.5 362.66L472.0 361.40L472.5 360.62L473.0 361.55L473.5 361.02L474.0 361.47L474.5 361.29L475.0 362.19L475.5 363.16L476.0 364.24L476.5 364.07L477.0 363.19L477.5 363.30L478.0 362.16L478.5 362.68L479.0 363.25L479.5 363.01L480.0 364.04L480.5 363.54L481.0 364.51L481.5 365.61L482.0 365.09L482.5 364.25L483.0 362.65L483.5 363.27L484.0 363.12L484.5 363.19L485.0 363.24L485.5 363.30L486.0 364.04L486.5 364.15L487.0 364.59L487.5 365.57L488.0 365.59L488.5 363.61L489.0 363.12L489.5 362.95L490.0 361.52L490.5 362.74L491.0 359.54L491.5 363.10L492.0 362.30L492.5 363.29L493.0 364.48L493.5 365.68L494.0 365.85L494.5 365.87L495.0 364.50L495.5 363.69L496.0 363.16L496.5 363.58L497.0 363.62L497.5 364.47L498.0 363.54L498.5 362.70L499.0 361.61L499.5 362.71L500.0 362.03L500.5 363.14L501.0 365.95L501.5 363.80L502.0 363.18L502.5 362.94L503.0 361.85L503.5 362.42L504.0 361.66L504.5 362.44L505.0 363.19L505.5 363.71L506.0 364.26L506.5 365.61L507.0 365.60L507.5 365.90L508.0 363.73L508.5 363.63L509.0 361.81L509.5 362.86L510.0 361.98L510.5 362.97L511.0 364.09L511.5 365.62L512.0 365.80L512.5 365.58L513.0 359.69L513.5 356.24L514.0 357.80L514.5 357.96L515.0 360.47L515.5 361.85L516.0 361.55L516.5 360.75L517.0 360.92L517.5 361.14L518.0 358.87L518.5 360.78L519.0 359.85L519.5 361.43L520.0 361.09L520.5 362.56L521.0 363.34L521.5 363.13L522.0 360.99L522.5 361.00L523.0 361.08L523.5 359.10L524.0 358.92L524.5 360.77L525.0 361.29L525.5 362.22L526.0 361.06L526.5 362.64L527.0 362.27L527.5 361.11L528.0 358.81L528.5 359.85L529.0 355.55L529.5 357.47L530.0 355.99L530.5 355.41L531.0 358.44L531.5 357.68L532.0 360.38L532.5 362.46L533.0 360.53L533.5 361.08L534.0 361.21L534.5 359.97L535.0 357.29L535.5 357.07L536.0 359.37L536.5 359.15L537.0 361.94L537.5 362.13L538.0 365.94L538.5 365.87L539.0 363.15L539.5 361.64L540.0 360.66L540.5 358.75L541.0 358.49L541.5 360.68L542.0 362.33L542.5 362.42L543.0 361.95L543.5 361.73L544.0 359.51L544.5 360.93L545.0 358.80L545.5 359.06L546.0 357.92L546.5 359.01L547.0 360.43L547.5 359.47L548.0 359.61L548.5 362.64L549.0 362.64L549.5 363.53L550.0 360.36L550.5 358.06L551.0 359.98L551.5 360.33L552.0 363.52L552.5 362.19L553.0 361.53L553.5 361.14L554.0 360.46L554.5 358.81L555.0 354.63L555.5 357.33L556.0 358.42L556.5 358.42L557.0 360.90L557.5 360.27L558.0 362.39L558.5 361.78L559.0 362.51L559.5 360.58L560.0 360.44L560.5 358.52L561.0 358.08L561.5 358.39L562.0 361.36L562.5 361.97L563.0 361.48L563.5 364.58L564.0 363.95L564.5 363.65L565.0 363.45L565.5 361.99L566.0 362.02L566.5 363.31L567.0 363.46L567.5 363.50L568.0 363.52L568.5 364.32L569.0 365.56L569.5 364.74L570.0 362.91L570.5 363.51L571.0 363.22L571.5 364.67L572.0 364.52L572.5 363.85L573.0 362.20L573.5 362.45L574.0 362.79L574.5 362.61L575.0 363.27L575.5 362.95L576.0 364.33L576.5 365.72L577.0 365.79L577.5 365.90L578.0 364.53L578.5 362.27L579.0 362.38L579.5 362.20L580.0 363.81L580.5 363.90L581.0 365.92L581.5 365.78L582.0 365.80L582.5 364.89L583.0 364.34L583.5 364.05L584.0 363.85L584.5 363.47L585.0 364.10L585.5 364.14L586.0 364.23L586.5 363.47L587.0 363.23L587.5 363.12L588.0 363.35L588.5 363.77L589.0 364.64L589.5 364.41L590.0 363.27L590.5 362.98L591.0 361.76L591.5 362.26L592.0 362.99L592.5 363.77L593.0 364.16L593.5 363.50L594.0 362.85L594.5 363.31L595.0 363.99L595.5 364.71L596.0 365.56L596.5 362.61L597.0 358.91L597.5 360.56L598.0 359.86L598.5 359.79L599.0 357.93L599.5 359.53L600.0 356.86L600.5 358.14L601.0 360.48L601.5 359.90L602.0 360.79L602.5 362.68L603.0 360.44L603.5 360.27L604.0 358.89L604.5 356.45L605.0 358.08L605.5 359.53L606.0 360.91L606.5 362.16L607.0 361.96L607.5 360.79L608.0 361.32L608.5 361.24L609.0 359.33L609.5 358.41L610.0 359.79L610.5 357.98L611.0 360.46L611.5 361.47L612.0 362.16L612.5 363.03L613.0 361.28L613.5 360.74L614.0 358.47L614.5 359.62L615.0 361.95L615.5 361.76L616.0 360.09L616.5 357.10L617.0 359.73L617.5 359.66L618.0 359.31L618.5 359.40L619.0 361.64L619.5 362.95L620.0 360.02L620.5 357.95L621.0 360.00L621.5 357.88L622.0 359.47L622.5 360.79L623.0 365.52L623.5 365.80L624.0 365.87L624.5 361.23L625.0 358.63L625.5 357.04L626.0 358.47L626.5 356.97L627.0 358.02L627.5 358.78L628.0 360.62L628.5 362.56L629.0 362.08L629.5 361.04L630.0 361.23L630.5 360.39L631.0 359.69L631.5 361.58L632.0 361.16L632.5 360.68L633.0 361.73L633.5 361.69L634.0 362.95L634.5 362.87L635.0 361.75L635.5 360.58L636.0 356.87L636.5 359.79L637.0 358.95L637.5 362.08L638.0 365.64L638.5 365.57L639.0 361.28L639.5 361.89L640.0 360.17L640.5 358.51L641.0 357.36L641.5 358.95L642.0 358.13L642.5 359.21L643.0 358.13L643.5 360.15L644.0 358.31L644.5 361.42L645.0 362.00L645.5 364.05L646.0 364.00L646.5 363.03L647.0 363.01L647.5 362.81L648.0 364.05L648.5 364.63L649.0 363.64L649.5 364.34L650.0 364.69L650.5 365.51L651.0 364.38L651.5 362.74L652.0 363.86L652.5 362.77L653.0 363.72L653.5 363.75L654.0 363.04L654.5 363.00L655.0 364.19L655.5 363.80L656.0 365.00L656.5 363.93L657.0 362.40L657.5 362.50L658.0 364.00L658.5 365.87L659.0 365.90L659.5 365.89L660.0 364.19L660.5 364.00L661.0 362.75L661.5 363.12L662.0 361.97L662.5 362.09L663.0 361.66L663.5 362.20L664.0 363.50L664.5 363.70L665.0 363.71L665.5 364.87L666.0 364.79L666.5 364.34L667.0 364.38L667.5 364.19L668.0 363.36L668.5 364.34L669.0 363.94L669.5 364.35L670.0 364.41L670.5 364.66L671.0 365.81L671.5 363.29L672.0 361.79L672.5 359.22L673.0 359.01L673.5 358.27L674.0 358.58L674.5 361.47L675.0 360.96L675.5 360.84L676.0 363.48L676.5 361.73L677.0 361.83L677.5 361.28L678.0 361.31L678.5 361.83L679.0 361.04L679.5 362.11L680.0 361.72L680.5 363.32L681.0 363.44L681.5 362.29L682.0 360.84L682.5 361.76L683.0 361.14L683.5 360.71L684.0 361.30L684.5 362.12L685.0 363.51L685.5 363.29L686.0 360.98L686.5 360.36L687.0 359.92L687.5 358.51L688.0 355.12L688.5 359.11L689.0 360.84L689.5 359.70L690.0 362.09L690.5 362.34L691.0 362.36L691.5 361.55L692.0 360.76L692.5 359.16L693.0 359.53L693.5 359.12L694.0 358.11L694.5 356.95L695.0 358.51L695.5 358.76L696.0 358.84L696.5 361.38L697.0 362.18L697.5 362.90L698.0 360.10L698.5 358.96L699.0 360.63L699.5 355.06L700.0 358.87L700.5 358.73L701.0 360.47L701.5 362.37L702.0 363.13L702.5 361.95L703.0 360.89L703.5 360.91L704.0 358.94L704.5 359.50L705.0 361.07L705.5 361.70L706.0 363.64L706.5 365.82L707.0 362.30L707.5 358.63L708.0 359.94L708.5 359.06L709.0 358.96L709.5 358.48L710.0 361.82L710.5 362.52L711.0 361.32L711.5 358.88L712.0 358.36L712.5 356.30L713.0 357.29L713.5 359.51L714.0 359.43L714.5 360.43L715.0 362.79L715.5 361.26L716.0 353.84L716.5 355.25L717.0 355.06L717.5 358.03L718.0 358.02L718.5 359.73L719.0 361.71L719.5 365.78L720.0 365.62L720.5 365.53L721.0 363.18L721.5 363.26L722.0 362.62L722.5 362.72L723.0 364.23L723.5 363.88L724.0 363.24L724.5 362.25L725.0 361.55L725.5 362.83L726.0 362.18L726.5 361.27L727.0 361.86L727.5 362.99L728.0 363.20L728.5 364.41L729.0 364.45L729.5 363.94L730.0 363.01L730.5 361.83L731.0 362.39L731.5 362.95L732.0 363.13L732.5 364.16L733.0 365.66L733.5 364.50L734.0 362.89L734.5 363.26L735.0 363.24L735.5 364.93L736.0 363.22L736.5 363.03L737.0 364.44L737.5 365.73L738.0 364.35L738.5 364.29L739.0 363.12L739.5 363.10L740.0 363.11L740.5 363.62L741.0 363.58L741.5 365.53L742.0 365.66L742.5 365.92L743.0 364.58L743.5 364.70L744.0 363.54L744.5 362.57L745.0 363.39L745.5 363.72L746.0 364.06L746.5 364.84L747.0 365.07L747.5 364.80L748.0 363.84L748.5 363.04L749.0 362.71L749.5 362.96L750.0 363.55L750.5 363.66L751.0 364.44L751.5 364.27L752.0 363.56L752.5 363.40L753.0 363.63L753.5 364.48L754.0 363.55L754.5 362.52L755.0 360.69L755.5 362.10L756.0 361.61L756.5 361.92L757.0 362.72L757.5 362.58L758.0 364.44L758.5 365.50L759.0 364.31L759.5 362.65L760.0 362.47L760.5 362.54L761.0 362.18L761.5 363.55L762.0 363.66L762.5 365.85L763.0 362.85L763.5 361.10L764.0 361.19L764.5 360.67L765.0 360.25L765.5 359.48L766.0 359.79L766.5 358.77L767.0 359.46L767.5 359.72L768.0 361.85L768.5 362.23L769.0 363.03L769.5 363.04L770.0 362.46L770.5 361.08L771.0 361.18L771.5 360.13L772.0 361.53L772.5 361.17L773.0 361.26L773.5 361.79L774.0 363.35L774.5 361.94L775.0 361.30L775.5 359.39L776.0 360.36L776.5 360.01L777.0 357.92L777.5 359.39L778.0 359.45L778.5 359.98L779.0 360.67L779.5 361.74L780.0 362.05L780.5 363.32L781.0 365.64L781.5 365.80L782.0 363.39L782.5 362.14L783.0 362.13L783.5 361.77L784.0 360.62L784.5 359.07L785.0 360.64L785.5 359.43L786.0 361.24L786.5 362.52L787.0 361.64L787.5 362.81L788.0 362.78L788.5 361.03L789.0 359.81L789.5 358.16L790.0 358.90L790.5 359.80L791.0 359.23L791.5 359.34L792.0 359.35L792.5 361.45L793.0 362.39L793.5 360.12L794.0 358.59L794.5 359.06L795.0 358.28L795.5 359.46L796.0 361.31L796.5 361.56L797.0 365.71L797.5 363.36L798.0 360.17L798.5 359.19L799.0 358.90L799.5 358.46L800.0 361.47L800.5 360.66L801.0 361.81L801.5 360.23L802.0 360.51L802.5 358.72L803.0 359.05L803.5 358.51L804.0 355.66L804.5 355.38L805.0 354.46L805.5 356.06L806.0 359.76L806.5 359.48L807.0 360.29L807.5 358.96L808.0 362.62L808.5 361.15L809.0 360.32L809.5 359.37L810.0 361.32L810.5 363.52L811.0 363.70L811.5 363.69L812.0 362.04L812.5 362.94L813.0 362.96L813.5 363.03L814.0 364.02L814.5 365.88L815.0 365.93L815.5 363.73L816.0 361.72L816.5 363.19L817.0 363.97L817.5 364.60L818.0 363.80L818.5 362.69L819.0 364.22L819.5 364.32L820.0 364.99L820.5 364.34L821.0 364.38L821.5 363.58L822.0 364.10L822.5 363.35L823.0 363.44L823.5 363.78L824.0 364.09L824.5 364.24L825.0 365.14L825.5 365.75L826.0 364.42L826.5 364.03L827.0 364.14L827.5 363.49L828.0 363.41L828.5 363.56L829.0 364.23L829.5 364.80L830.0 365.56L830.5 365.53L831.0 365.76L831.5 364.59L832.0 363.42L832.5 362.53L833.0 362.76L833.5 364.04L834.0 364.28L834.5 365.89L835.0 364.91L835.5 362.91L836.0 363.82L836.5 363.06L837.0 363.96L837.5 362.98L838.0 363.94L838.5 363.82L839.0 364.86L839.5 365.95L840.0 364.57L840.5 364.47L841.0 363.33L841.5 363.69L842.0 363.18L842.5 364.02L843.0 364.75L843.5 365.52L844.0 363.46L844.5 361.64L845.0 360.17L845.5 361.37L846.0 361.10L846.5 359.45L847.0 360.53L847.5 361.04L848.0 361.21L848.5 360.93L849.0 360.53L849.5 362.59L850.0 362.95L850.5 361.56L851.0 358.29L851.5 358.07L852.0 359.37L852.5 359.01L853.0 360.97L853.5 365.90L854.0 362.62L854.5 361.29L855.0 360.06L855.5 360.73L856.0 362.42L856.5 363.01L857.0 362.03L857.5 360.36L858.0 359.74L858.5 360.99L859.0 360.39L859.5 361.16L860.0 361.86L860.5 362.30L861.0 362.83L861.5 360.01L862.0 360.00L862.5 354.62L863.0 356.22L863.5 357.51L864.0 359.15L864.5 360.59L865.0 365.72L865.5 362.36L866.0 361.40L866.5 360.39L867.0 359.12L867.5 359.52L868.0 361.36L868.5 361.55L869.0 361.72L869.5 359.52L870.0 359.30L870.5 357.05L871.0 357.79L871.5 359.65L872.0 356.81L872.5 359.95L873.0 360.73L873.5 361.19L874.0 361.90L874.5 360.74L875.0 360.08L875.5 360.79L876.0 360.31L876.5 359.04L877.0 361.27L877.5 360.93L878.0 361.40L878.5 361.13L879.0 360.98L879.5 360.67L880.0 357.96L880.5 359.37L881.0 357.20L881.5 357.06L882.0 359.55L882.5 361.79L883.0 362.73L883.5 365.68L884.0 365.52L884.5 363.65L885.0 362.81L885.5 361.38L886.0 360.30L886.5 361.27L887.0 359.24L887.5 361.52L888.0 360.87L888.5 361.87L889.0 361.40L889.5 362.77L890.0 362.47L890.5 363.86L891.0 365.59L891.5 364.04L892.0 363.85L892.5 362.28L893.0 362.70L893.5 361.68L894.0 363.40L894.5 362.87L895.0 363.68L895.5 364.01L896.0 364.27L896.5 363.47L897.0 363.47L897.5 362.96L898.0 363.32L898.5 363.11L899.0 363.97L899.5 365.73L900.0 365.80L900.5 365.90L901.0 364.45L901.5 363.20L902.0 363.01L902.5 362.26L903.0 361.38L903.5 362.56L904.0 361.95L904.5 361.53L905.0 363.33L905.5 364.03L906.0 363.77L906.5 365.51L907.0 365.63L907.5 363.82L908.0 363.20L908.5 362.41L909.0 362.95L909.5 361.89L910.0 362.75L910.5 364.52L911.0 362.82L911.5 361.38L912.0 360.16L912.5 362.26L913.0 362.32L913.5 362.17L914.0 361.45L914.5 358.39L915.0 357.55L915.5 357.86L916.0 359.72L916.5 357.61L917.0 358.45L917.5 358.70L918.0 361.98L918.5 361.24L919.0 365.67L919.5 365.51L920.0 361.08L920.5 359.15L921.0 360.09L921.5 359.61L922.0 359.12L922.5 358.05L923.0 359.39L923.5 359.54L924.0 361.25L924.5 362.06L925.0 361.70L925.5 360.25L926.0 361.15L926.5 359.59L927.0 362.92L927.5 361.92L928.0 360.73L928.5 359.23L929.0 358.85L929.5 357.78L930.0 361.95L930.5 363.35L931.0 362.34L931.5 359.53L932.0 359.53L932.5 363.49L933.0 362.17L933.5 360.21L934.0 359.61L934.5 357.95L935.0 361.42L935.5 360.83L936.0 365.63L936.5 363.01L937.0 360.52L937.5 360.55L938.0 360.36L938.5 359.89L939.0 360.28L939.5 361.73L940.0 363.13L940.5 364.46L941.0 363.97L941.5 364.23L942.0 363.38L942.5 365.91L943.0 362.80L943.5 362.70L944.0 362.52L944.5 360.32L945.0 361.39L945.5 361.41L946.0 360.96L946.5 362.94L947.0 362.69L947.5 365.53L948.0 365.86L948.5 365.95L949.0 362.76L949.5 361.20L950.0 360.46L950.5 359.86L951.0 362.30L951.5 362.35L952.0 361.65L952.5 362.25L953.0 358.93L953.5 358.35L954.0 357.60L954.5 355.25L955.0 356.76L955.5 355.48L956.0 360.34L956.5 358.75L957.0 358.40L957.5 361.05L958.0 360.91L958.5 365.90L959.0 365.90L959.5 365.92L960.0 361.49L960.5 359.01L961.0 361.03L961.5 359.56L962.0 362.77L962.5 362.26L963.0 359.23L963.5 359.50L964.0 357.36L964.5 358.17L965.0 356.21L965.5 359.56L966.0 356.14L966.5 360.70L967.0 365.60L967.5 364.15L968.0 362.30L968.5 362.24L969.0 362.70L969.5 363.82L970.0 365.10L970.5 363.93L971.0 363.73L971.5 363.50L972.0 363.97L972.5 363.02L973.0 363.83L973.5 363.99L974.0 364.92L974.5 365.69L975.0 363.86L975.5 363.42L976.0 363.21L976.5 362.83L977.0 362.87L977.5 362.49L978.0 363.08L978.5 363.41L979.0 364.20L979.5 364.60L980.0 364.01L980.5 363.55L981.0 362.63L981.5 363.20L982.0 363.34L982.5 364.07L983.0 363.86L983.5 364.18L984.0 364.99L984.5 364.28L985.0 363.39L985.5 363.75L986.0 363.11L986.5 362.60L987.0 361.43L987.5 362.32L988.0 363.04L988.5 363.05L989.0 362.98L989.5 363.97L990.0 365.73L990.5 365.50L991.0 365.68L991.5 364.15L992.0 364.32L992.5 363.81L993.0 363.41L993.5 362.67L994.0 363.08L994.5 363.98L995.0 364.41L995.5 364.42L996.0 363.28L996.5 362.48L997.0 363.00L997.5 362.54L998.0 361.37L998.5 363.55L999.0 363.74L999.5 365.50L1000.0 364.65L1000.5 363.34L1001.0 363.04L1001.5 362.50L1002.0 362.83L1002.5 363.68L1003.0 364.06L1003.5 364.56L1004.0 364.04L1004.5 363.42L1005.0 364.35L1005.5 365.64L1006.0 365.81L1006.5 364.67L1007.0 363.99L1007.5 363.21L1008.0 363.61L1008.5 362.99L1009.0 363.44L1009.5 364.24L1010.0 364.60L1010.5 364.23L1011.0 363.03L1011.5 363.32L1012.0 363.49L1012.5 364.77L1013.0 364.29L1013.5 364.26L1014.0 363.68L1014.5 363.30L1015.0 363.44L1015.5 363.23L1016.0 363.86L1016.5 364.17L1017.0 364.75L1017.5 365.54L1018.0 365.95L1018.5 363.07L1019.0 361.84L1019.5 359.35L1020.0 359.56L1020.5 361.19L1021.0 362.39L1021.5 361.71L1022.0 358.18L1022.5 357.83L1023.0 355.63L1023.5 354.96L1024.0 356.97L1024.5 355.38L1025.0 357.02L1025.5 360.36L1026.0 365.72L1026.0 366.92L1025.5 371.45L1025.0 376.36L1024.5 376.67L1024.0 375.48L1023.5 378.98L1023.0 376.35L1022.5 374.02L1022.0 375.11L1021.5 370.84L1021.0 369.76L1020.5 371.47L1020.0 372.52L1019.5 373.30L1019.0 370.38L1018.5 369.09L1018.0 366.65L1017.5 367.03L1017.0 367.94L1016.5 368.22L1016.0 368.63L1015.5 369.44L1015.0 369.08L1014.5 369.42L1014.0 369.10L1013.5 368.11L1013.0 368.21L1012.5 367.73L1012.0 369.21L1011.5 369.63L1011.0 369.74L1010.5 368.46L1010.0 367.84L1009.5 368.29L1009.0 369.04L1008.5 369.19L1008.0 368.67L1007.5 369.18L1007.0 368.49L1006.5 367.79L1006.0 366.76L1005.5 366.90L1005.0 368.04L1004.5 369.26L1004.0 368.40L1003.5 368.15L1003.0 368.36L1002.5 368.65L1002.0 370.11L1001.5 369.75L1001.0 369.17L1000.5 369.21L1000.0 367.82L999.5 367.06L999.0 368.79L998.5 368.77L998.0 371.10L997.5 369.53L997.0 369.61L996.5 369.96L996.0 369.16L995.5 368.39L995.0 368.16L994.5 368.77L994.0 369.05L993.5 370.10L993.0 368.80L992.5 368.47L992.0 368.48L991.5 368.31L991.0 366.95L990.5 367.01L990.0 366.88L989.5 368.76L989.0 369.34L988.5 369.53L988.0 369.82L987.5 370.04L987.0 370.86L986.5 369.50L986.0 369.65L985.5 368.92L985.0 369.49L984.5 368.47L984.0 367.63L983.5 368.54L983.0 368.92L982.5 368.63L982.0 369.49L981.5 369.46L981.0 370.04L980.5 368.92L980.0 368.39L979.5 367.94L979.0 368.48L978.5 369.05L978.0 369.63L977.5 370.32L977.0 370.06L976.5 369.88L976.0 369.70L975.5 369.12L975.0 368.73L974.5 366.93L974.0 367.53L973.5 368.54L973.0 368.75L972.5 369.70L972.0 368.47L971.5 368.89L971.0 368.97L970.5 368.34L970.0 367.38L969.5 369.05L969.0 370.00L968.5 370.33L968.0 370.64L967.5 368.54L967.0 366.98L966.5 372.34L966.0 375.65L965.5 372.82L965.0 375.24L964.5 373.80L964.0 374.26L963.5 372.27L963.0 374.10L962.5 370.24L962.0 370.25L961.5 373.00L961.0 370.79L960.5 373.62L960.0 371.42L959.5 366.67L959.0 366.67L958.5 366.66L958.0 371.35L957.5 371.83L957.0 373.74L956.5 373.67L956.0 371.96L955.5 377.54L955.0 375.40L954.5 378.02L954.0 374.41L953.5 375.20L953.0 372.66L952.5 370.62L952.0 371.35L951.5 370.28L951.0 370.56L950.5 372.87L950.0 371.42L949.5 371.88L949.0 369.74L948.5 366.66L948.0 366.78L947.5 367.06L947.0 369.59L946.5 369.92L946.0 371.85L945.5 371.43L945.0 371.30L944.5 372.95L944.0 370.50L943.5 370.10L943.0 369.59L942.5 366.69L942.0 369.18L941.5 368.47L941.0 368.52L940.5 368.24L940.0 369.38L939.5 371.04L939.0 371.70L938.5 373.31L938.0 372.48L937.5 371.42L937.0 371.34L936.5 369.64L936.0 366.95L935.5 372.25L935.0 370.51L934.5 375.22L934.0 373.40L933.5 371.95L933.0 369.86L932.5 369.36L932.0 372.64L931.5 373.73L931.0 370.20L930.5 369.57L930.0 370.98L929.5 375.18L929.0 373.42L928.5 374.10L928.0 371.74L927.5 370.15L927.0 369.96L926.5 372.31L926.0 370.97L925.5 372.19L925.0 370.82L924.5 370.90L924.0 371.02L923.5 373.69L923.0 372.29L922.5 373.78L922.0 373.82L921.5 373.19L921.0 373.13L920.5 372.65L920.0 370.91L919.5 367.09L919.0 367.00L918.5 371.55L918.0 370.91L917.5 374.72L917.0 373.57L916.5 373.88L916.0 373.11L915.5 373.60L915.0 374.17L914.5 373.66L914.0 370.47L913.5 370.57L913.0 369.88L912.5 370.55L912.0 373.16L911.5 371.45L911.0 369.78L910.5 368.11L910.0 369.69L909.5 370.19L909.0 369.77L908.5 370.34L908.0 369.15L907.5 368.93L907.0 367.03L906.5 367.05L906.0 369.00L905.5 368.47L905.0 369.21L904.5 371.43L904.0 371.09L903.5 370.46L903.0 371.60L902.5 370.54L902.0 369.43L901.5 369.12L901.0 368.09L900.5 366.65L900.0 366.79L899.5 366.79L899.0 368.44L898.5 369.12L898.0 369.49L897.5 369.66L897.0 369.28L896.5 369.13L896.0 368.49L895.5 368.52L895.0 368.86L894.5 369.22L894.0 369.09L893.5 370.45L893.0 370.30L892.5 370.08L892.0 368.67L891.5 368.30L891.0 366.99L890.5 368.70L890.0 370.45L889.5 370.04L889.0 370.86L888.5 370.61L888.0 372.28L887.5 371.22L887.0 374.10L886.5 371.29L886.0 371.76L885.5 371.80L885.0 369.94L884.5 369.24L884.0 367.14L883.5 366.99L883.0 370.22L882.5 370.49L882.0 372.19L881.5 376.52L881.0 376.32L880.5 373.44L880.0 375.48L879.5 371.30L879.0 372.03L878.5 371.60L878.0 371.74L877.5 370.90L877.0 371.22L876.5 374.16L876.0 372.41L875.5 371.52L875.0 372.32L874.5 371.35L874.0 370.81L873.5 371.49L873.0 371.85L872.5 373.40L872.0 375.62L871.5 372.74L871.0 373.74L870.5 374.48L870.0 373.30L869.5 373.11L869.0 370.52L868.5 370.95L868.0 371.82L867.5 373.85L867.0 372.78L866.5 372.02L866.0 370.96L865.5 370.69L865.0 366.94L864.5 371.93L864.0 373.11L863.5 375.26L863.0 376.54L862.5 378.64L862.0 372.17L861.5 372.19L861.0 369.25L860.5 370.08L860.0 370.24L859.5 372.02L859.0 372.79L858.5 371.78L858.0 373.56L857.5 372.57L857.0 370.54L856.5 369.85L856.0 370.11L855.5 371.60L855.0 373.28L854.5 370.88L854.0 369.81L853.5 366.68L853.0 371.66L852.5 373.35L852.0 372.77L851.5 374.53L851.0 373.56L850.5 371.42L850.0 369.97L849.5 369.75L849.0 371.30L848.5 371.28L848.0 371.93L847.5 372.18L847.0 371.35L846.5 373.26L846.0 371.60L845.5 371.47L845.0 372.28L844.5 370.47L844.0 369.20L843.5 367.13L843.0 367.76L842.5 368.42L842.0 369.05L841.5 368.57L841.0 368.99L840.5 368.09L840.0 368.18L839.5 366.66L839.0 367.76L838.5 368.67L838.0 368.56L837.5 369.77L837.0 368.68L836.5 369.40L836.0 368.49L835.5 369.25L835.0 367.66L834.5 366.70L834.0 368.15L833.5 368.58L833.0 369.51L832.5 369.66L832.0 369.36L831.5 368.01L831.0 366.90L830.5 366.96L830.0 367.02L829.5 367.88L829.0 368.11L828.5 369.10L828.0 368.80L827.5 369.13L827.0 368.39L826.5 368.46L826.0 367.97L825.5 366.87L825.0 367.40L824.5 368.23L824.0 368.41L823.5 368.92L823.0 369.18L822.5 369.20L822.0 368.63L821.5 368.90L821.0 368.40L820.5 368.22L820.0 367.63L819.5 368.06L819.0 368.29L818.5 370.30L818.0 368.45L817.5 368.04L817.0 368.56L816.5 369.52L816.0 371.37L815.5 368.93L815.0 366.63L814.5 366.73L814.0 368.54L813.5 369.89L813.0 369.36L812.5 369.72L812.0 370.58L811.5 368.52L811.0 368.64L810.5 369.11L810.0 371.26L809.5 372.43L809.0 371.87L808.5 371.65L808.0 370.40L807.5 374.11L807.0 372.52L806.5 373.13L806.0 372.76L805.5 375.74L805.0 379.38L804.5 376.76L804.0 376.74L803.5 373.46L803.0 373.02L802.5 373.70L802.0 372.23L801.5 371.70L801.0 370.45L800.5 371.78L800.0 371.07L799.5 374.21L799.0 373.44L798.5 373.16L798.0 371.81L797.5 369.41L797.0 366.94L796.5 370.94L796.0 370.55L795.5 373.24L795.0 373.81L794.5 373.88L794.0 373.82L793.5 371.89L793.0 370.68L792.5 371.01L792.0 373.92L791.5 372.86L791.0 372.53L790.5 372.07L790.0 372.84L789.5 374.99L789.0 373.24L788.5 371.39L788.0 369.57L787.5 369.30L787.0 370.86L786.5 370.33L786.0 370.66L785.5 373.11L785.0 371.30L784.5 373.17L784.0 371.85L783.5 370.16L783.0 370.38L782.5 370.80L782.0 369.41L781.5 366.85L781.0 366.95L780.5 369.13L780.0 370.52L779.5 370.47L779.0 371.18L778.5 372.66L778.0 372.53L777.5 372.85L777.0 374.54L776.5 372.19L776.0 371.63L775.5 373.67L775.0 371.22L774.5 370.85L774.0 369.08L773.5 371.27L773.0 371.12L772.5 371.12L772.0 371.05L771.5 372.29L771.0 371.79L770.5 370.97L770.0 370.21L769.5 369.30L769.0 369.69L768.5 370.78L768.0 370.39L767.5 373.40L767.0 372.98L766.5 374.62L766.0 373.46L765.5 373.92L765.0 371.50L764.5 371.66L764.0 371.46L763.5 371.81L763.0 369.79L762.5 366.79L762.0 368.66L761.5 368.81L761.0 370.77L760.5 370.16L760.0 370.20L759.5 369.46L759.0 368.02L758.5 367.01L758.0 367.89L757.5 369.95L757.0 369.83L756.5 370.39L756.0 370.48L755.5 370.07L755.0 371.85L754.5 370.38L754.0 368.86L753.5 367.98L753.0 368.94L752.5 369.36L752.0 368.85L751.5 368.54L751.0 368.02L750.5 369.03L750.0 369.09L749.5 369.47L749.0 369.41L748.5 369.41L748.0 368.70L747.5 367.66L747.0 367.64L746.5 367.56L746.0 368.37L745.5 368.55L745.0 369.29L744.5 369.56L744.0 369.20L743.5 367.89L743.0 368.05L742.5 366.71L742.0 366.87L741.5 367.14L741.0 368.98L740.5 368.94L740.0 369.69L739.5 369.83L739.0 369.73L738.5 368.30L738.0 368.48L737.5 366.79L737.0 368.00L736.5 369.34L736.0 369.37L735.5 367.69L735.0 368.97L734.5 369.15L734.0 369.83L733.5 368.26L733.0 366.85L732.5 368.22L732.0 369.79L731.5 369.66L731.0 370.24L730.5 370.11L730.0 369.15L729.5 368.83L729.0 368.17L728.5 368.42L728.0 369.36L727.5 369.74L727.0 370.30L726.5 371.60L726.0 370.75L725.5 370.04L725.0 370.54L724.5 370.49L724.0 369.09L723.5 368.50L723.0 368.61L722.5 370.27L722.0 369.44L721.5 369.58L721.0 369.49L720.5 367.04L720.0 366.98L719.5 366.75L719.0 370.49L718.5 372.72L718.0 373.58L717.5 374.90L717.0 378.86L716.5 378.66L716.0 378.25L715.5 370.68L715.0 369.78L714.5 371.38L714.0 373.80L713.5 373.03L713.0 375.05L712.5 377.10L712.0 373.91L711.5 374.13L711.0 371.21L710.5 369.75L710.0 371.06L709.5 373.04L709.0 372.59L708.5 373.14L708.0 372.54L707.5 374.14L707.0 370.36L706.5 366.74L706.0 368.72L705.5 371.28L705.0 371.92L704.5 372.90L704.0 373.06L703.5 371.93L703.0 371.20L702.5 370.12L702.0 369.01L701.5 369.67L701.0 371.80L700.5 373.52L700.0 373.05L699.5 378.45L699.0 372.16L698.5 374.05L698.0 371.83L697.5 370.03L697.0 369.81L696.5 370.53L696.0 372.66L695.5 373.86L695.0 373.72L694.5 374.70L694.0 375.22L693.5 372.55L693.0 372.15L692.5 374.18L692.0 371.28L691.5 370.76L691.0 369.99L690.5 370.32L690.0 369.90L689.5 372.92L689.0 371.55L688.5 372.53L688.0 377.63L687.5 373.63L687.0 372.24L686.5 371.85L686.0 371.90L685.5 368.94L685.0 368.76L684.5 370.21L684.0 371.59L683.5 371.16L683.0 372.02L682.5 370.87L682.0 372.05L681.5 370.28L681.0 369.04L680.5 368.93L680.0 370.54L679.5 370.06L679.0 371.67L678.5 370.74L678.0 370.59L677.5 370.59L677.0 370.21L676.5 371.28L676.0 369.20L675.5 372.38L675.0 371.83L674.5 370.79L674.0 374.25L673.5 375.28L673.0 373.84L672.5 372.92L672.0 371.05L671.5 369.27L671.0 366.73L670.5 368.10L670.0 368.27L669.5 367.96L669.0 368.69L668.5 368.10L668.0 369.52L667.5 368.51L667.0 368.31L666.5 368.39L666.0 367.84L665.5 367.80L665.0 368.80L664.5 369.08L664.0 368.78L663.5 370.86L663.0 371.20L662.5 370.86L662.0 371.02L661.5 369.36L661.0 370.24L660.5 368.64L660.0 368.38L659.5 366.74L659.0 366.67L658.5 366.75L658.0 368.53L657.5 370.42L657.0 370.34L656.5 368.65L656.0 367.69L655.5 368.60L655.0 368.66L654.5 369.42L654.0 369.59L653.5 368.60L653.0 368.83L652.5 369.94L652.0 368.97L651.5 369.80L651.0 368.16L650.5 367.17L650.0 367.92L649.5 368.33L649.0 368.83L648.5 367.88L648.0 368.35L647.5 370.04L647.0 369.97L646.5 369.20L646.0 368.45L645.5 368.30L645.0 370.05L644.5 370.84L644.0 373.66L643.5 372.81L643.0 374.51L642.5 374.15L642.0 374.99L641.5 372.78L641.0 374.95L640.5 373.72L640.0 372.76L639.5 370.42L639.0 370.70L638.5 367.02L638.0 366.89L637.5 369.94L637.0 373.83L636.5 373.07L636.0 375.80L635.5 372.04L635.0 370.43L634.5 370.11L634.0 369.44L633.5 370.72L633.0 371.37L632.5 372.18L632.0 370.75L631.5 371.27L631.0 373.54L630.5 371.55L630.0 370.74L629.5 372.04L629.0 369.94L628.5 369.69L628.0 371.68L627.5 372.85L627.0 373.62L626.5 376.53L626.0 373.90L625.5 374.37L625.0 373.51L624.5 371.70L624.0 366.69L623.5 366.75L623.0 367.02L622.5 371.85L622.0 373.41L621.5 374.49L621.0 373.00L620.5 375.22L620.0 371.79L619.5 369.79L619.0 370.89L618.5 373.79L618.0 372.77L617.5 372.04L617.0 373.50L616.5 375.80L616.0 371.99L615.5 371.04L615.0 370.62L614.5 372.39L614.0 373.31L613.5 371.60L613.0 371.58L612.5 369.65L612.0 370.26L611.5 371.68L611.0 372.70L610.5 375.24L610.0 372.81L609.5 375.11L609.0 374.07L608.5 370.74L608.0 371.75L607.5 372.01L607.0 370.54L606.5 370.15L606.0 371.78L605.5 373.39L605.0 374.83L604.5 376.31L604.0 372.77L603.5 372.06L603.0 372.22L602.5 369.71L602.0 372.26L601.5 373.27L601.0 372.76L600.5 373.38L600.0 375.85L599.5 373.78L599.0 374.23L598.5 372.29L598.0 372.91L597.5 371.30L597.0 373.64L596.5 369.60L596.0 366.96L595.5 367.99L595.0 368.67L594.5 369.39L594.0 370.09L593.5 368.79L593.0 368.62L592.5 368.62L592.0 369.44L591.5 370.79L591.0 370.18L590.5 369.75L590.0 368.90L589.5 368.17L589.0 368.14L588.5 368.83L588.0 369.38L587.5 369.70L587.0 369.02L586.5 369.11L586.0 368.26L585.5 368.28L585.0 368.67L584.5 369.41L584.0 368.95L583.5 368.41L583.0 368.23L582.5 367.84L582.0 366.79L581.5 366.88L581.0 366.68L580.5 368.47L580.0 368.69L579.5 370.63L579.0 369.67L578.5 370.60L578.0 368.19L577.5 366.73L577.0 366.80L576.5 366.80L576.0 368.36L575.5 369.22L575.0 369.32L574.5 369.47L574.0 369.29L573.5 369.80L573.0 370.49L572.5 368.88L572.0 368.07L571.5 367.69L571.0 369.12L570.5 369.23L570.0 369.60L569.5 367.79L569.0 367.08L568.5 368.26L568.0 369.41L567.5 368.74L567.0 369.15L566.5 369.11L566.0 369.97L565.5 370.81L565.0 369.18L564.5 369.02L564.0 368.32L563.5 368.11L563.0 371.67L562.5 370.49L562.0 370.55L561.5 373.50L561.0 374.73L560.5 374.46L560.0 371.75L559.5 371.90L559.0 369.95L558.5 371.22L558.0 370.43L557.5 372.98L557.0 372.19L556.5 373.94L556.0 373.18L555.5 374.15L555.0 376.54L554.5 372.89L554.0 372.28L553.5 370.97L553.0 371.17L552.5 369.93L552.0 369.31L551.5 371.44L551.0 372.84L550.5 375.07L550.0 372.73L549.5 369.07L549.0 370.15L548.5 369.83L548.0 372.12L547.5 373.10L547.0 372.05L546.5 374.07L546.0 375.29L545.5 373.83L545.0 372.81L544.5 372.26L544.0 372.69L543.5 371.39L543.0 371.11L542.5 370.38L542.0 369.94L541.5 371.36L541.0 374.66L540.5 373.44L540.0 372.20L539.5 371.51L539.0 369.29L538.5 366.77L538.0 366.65L537.5 370.94L537.0 370.59L536.5 373.62L536.0 372.23L535.5 375.21L535.0 375.25L534.5 372.41L534.0 370.75L533.5 371.65L533.0 372.46L532.5 370.52L532.0 371.50L531.5 375.07L531.0 374.28L530.5 378.00L530.0 375.22L529.5 374.50L529.0 377.40L528.5 371.89L528.0 373.47L527.5 371.63L527.0 370.71L526.5 369.96L526.0 371.43L525.5 370.66L525.0 371.02L524.5 371.69L524.0 372.71L523.5 372.47L523.0 370.96L522.5 371.30L522.0 371.49L521.5 369.09L521.0 369.31L520.5 369.60L520.0 371.04L519.5 371.36L519.0 372.78L518.5 371.60L518.0 373.47L517.5 371.58L517.0 371.01L516.5 371.95L516.0 371.20L515.5 370.39L515.0 371.99L514.5 374.10L514.0 375.77L513.5 376.14L513.0 372.03L512.5 366.99L512.0 366.78L511.5 366.88L511.0 368.30L510.5 369.91L510.0 370.68L509.5 369.67L509.0 370.67L508.5 369.21L508.0 368.60L507.5 366.69L507.0 367.04L506.5 366.99L506.0 368.53L505.5 369.09L505.0 369.66L504.5 370.46L504.0 371.32L503.5 369.81L503.0 370.73L502.5 369.68L502.0 369.71L501.5 368.96L501.0 366.60L500.5 369.47L500.0 371.04L499.5 369.61L499.0 370.66L498.5 370.23L498.0 368.82L497.5 367.94L497.0 368.78L496.5 368.94L496.0 369.35L495.5 368.86L495.0 367.84L494.5 366.76L494.0 366.73L493.5 366.88L493.0 367.89L492.5 369.14L492.0 370.47L491.5 369.58L491.0 373.67L490.5 370.12L490.0 371.56L489.5 369.60L489.0 369.22L488.5 368.59L488.0 366.95L487.5 367.03L487.0 368.14L486.5 368.20L486.0 368.67L485.5 369.28L485.0 369.43L484.5 369.50L484.0 369.30L483.5 368.99L483.0 369.99L482.5 368.30L482.0 367.56L481.5 366.96L481.0 367.83L480.5 368.64L480.0 368.55L479.5 369.54L479.0 369.36L478.5 369.66L478.0 370.37L477.5 369.29L477.0 369.05L476.5 368.75L476.0 368.31L475.5 369.61L475.0 369.81L474.5 371.30L474.0 371.22L473.5 371.71L473.0 371.19L472.5 372.64L472.0 370.92L471.5 369.80L471.0 370.72L470.5 371.00L470.0 371.20L469.5 373.36L469.0 373.91L468.5 372.65L468.0 371.75L467.5 370.73L467.0 370.08L466.5 370.81L466.0 373.24L465.5 377.53L465.0 376.20L464.5 375.26L464.0 370.92L463.5 369.78L463.0 373.84L462.5 373.75L462.0 374.54L461.5 378.55L461.0 372.92L460.5 373.33L460.0 369.96L459.5 371.48L459.0 374.97L458.5 375.17L458.0 374.23L457.5 373.04L457.0 372.51L456.5 371.30L456.0 369.12L455.5 370.50L455.0 371.03L454.5 374.16L454.0 374.88L453.5 376.31L453.0 376.31L452.5 371.63L452.0 370.69L451.5 366.83L451.0 366.78L450.5 366.73L450.0 370.60L449.5 372.41L449.0 376.11L448.5 375.59L448.0 376.02L447.5 376.70L447.0 372.01L446.5 372.46L446.0 366.83L445.5 366.64L445.0 366.70L444.5 370.44L444.0 369.78L443.5 371.39L443.0 372.57L442.5 372.59L442.0 372.15L441.5 372.92L441.0 371.49L440.5 370.86L440.0 373.33L439.5 371.12L439.0 371.04L438.5 370.64L438.0 370.42L437.5 371.55L437.0 371.53L436.5 372.11L436.0 372.05L435.5 371.38L435.0 368.94L434.5 370.12L434.0 374.16L433.5 375.16L433.0 378.01L432.5 376.55L432.0 379.01L431.5 373.44L431.0 373.32L430.5 371.70L430.0 372.02L429.5 372.18L429.0 373.16L428.5 376.66L428.0 377.92L427.5 375.32L427.0 375.32L426.5 375.43L426.0 373.29L425.5 372.16L425.0 370.71L424.5 367.64L424.0 367.81L423.5 368.86L423.0 368.31L422.5 369.54L422.0 369.08L421.5 369.05L421.0 368.24L420.5 367.68L420.0 368.53L419.5 369.14L419.0 369.21L418.5 369.23L418.0 368.78L417.5 368.08L417.0 368.20L416.5 368.07L416.0 370.13L415.5 370.08L415.0 369.32L414.5 368.27L414.0 369.88L413.5 368.40L413.0 367.82L412.5 367.45L412.0 368.70L411.5 369.95L411.0 370.64L410.5 370.15L410.0 371.69L409.5 370.37L409.0 369.84L408.5 369.13L408.0 366.94L407.5 367.80L407.0 369.04L406.5 368.89L406.0 367.68L405.5 366.73L405.0 366.66L404.5 366.81L404.0 368.71L403.5 368.14L403.0 369.07L402.5 368.70L402.0 368.55L401.5 368.65L401.0 368.83L400.5 368.33L400.0 368.35L399.5 368.20L399.0 367.52L398.5 368.15L398.0 369.24L397.5 368.62L397.0 369.08L396.5 369.65L396.0 369.49L395.5 369.46L395.0 368.25L394.5 367.91L394.0 368.72L393.5 368.84L393.0 369.61L392.5 368.77L392.0 368.05L391.5 366.65L391.0 367.84L390.5 368.26L390.0 369.01L389.5 368.71L389.0 368.34L388.5 368.19L388.0 367.88L387.5 366.93L387.0 366.70L386.5 366.99L386.0 368.87L385.5 370.33L385.0 368.67L384.5 368.29L384.0 367.99L383.5 368.85L383.0 368.91L382.5 369.59L382.0 370.49L381.5 369.47L381.0 368.91L380.5 368.27L380.0 367.03L379.5 368.31L379.0 369.58L378.5 370.60L378.0 369.30L377.5 369.84L377.0 368.79L376.5 368.57Z" fill="#fff" stroke="#fff" stroke-width="0.3" stroke-linejoin="round"/></svg>

<!-- timeline scroll -->
<div class="abs" style="left:366px;top:448.500px;width:658px;height:5px;background:#212121"></div>
<!-- playhead -->
<div class="abs" style="left:389.600px;top:336px;width:1.400px;height:117.800px;background:#f0f0f0"></div>
<svg style="left:385.200px;top:332.600px" width="10.200" height="10.800" viewBox="0 0 10.200 10.800"><path d="M0 0H10.200V6.600L5.100 10.800L0 6.600Z" fill="#fff"/></svg>
<!-- bottom browser scrollbar -->
<div class="abs" style="left:351.300px;top:455.900px;width:320.200px;height:6px;background:#c6c6c6;border-radius:2.500px 2.500px 0 0"></div>
<!-- zoom fab -->
<div class="btn" style="left:984px;top:422px;width:30px;height:29.600px;background:#2e2e2e;border-radius:4.5px"></div>
<svg style="left:992.600px;top:431px" width="13" height="13" viewBox="0 0 13 13"><circle cx="5" cy="5" r="3.900" fill="none" stroke="#f2f2f2" stroke-width="1.300"/><path d="M8 8L12 12" stroke="#f2f2f2" stroke-width="1.500" stroke-linecap="round"/></svg>

</div>
</body>
</html>
